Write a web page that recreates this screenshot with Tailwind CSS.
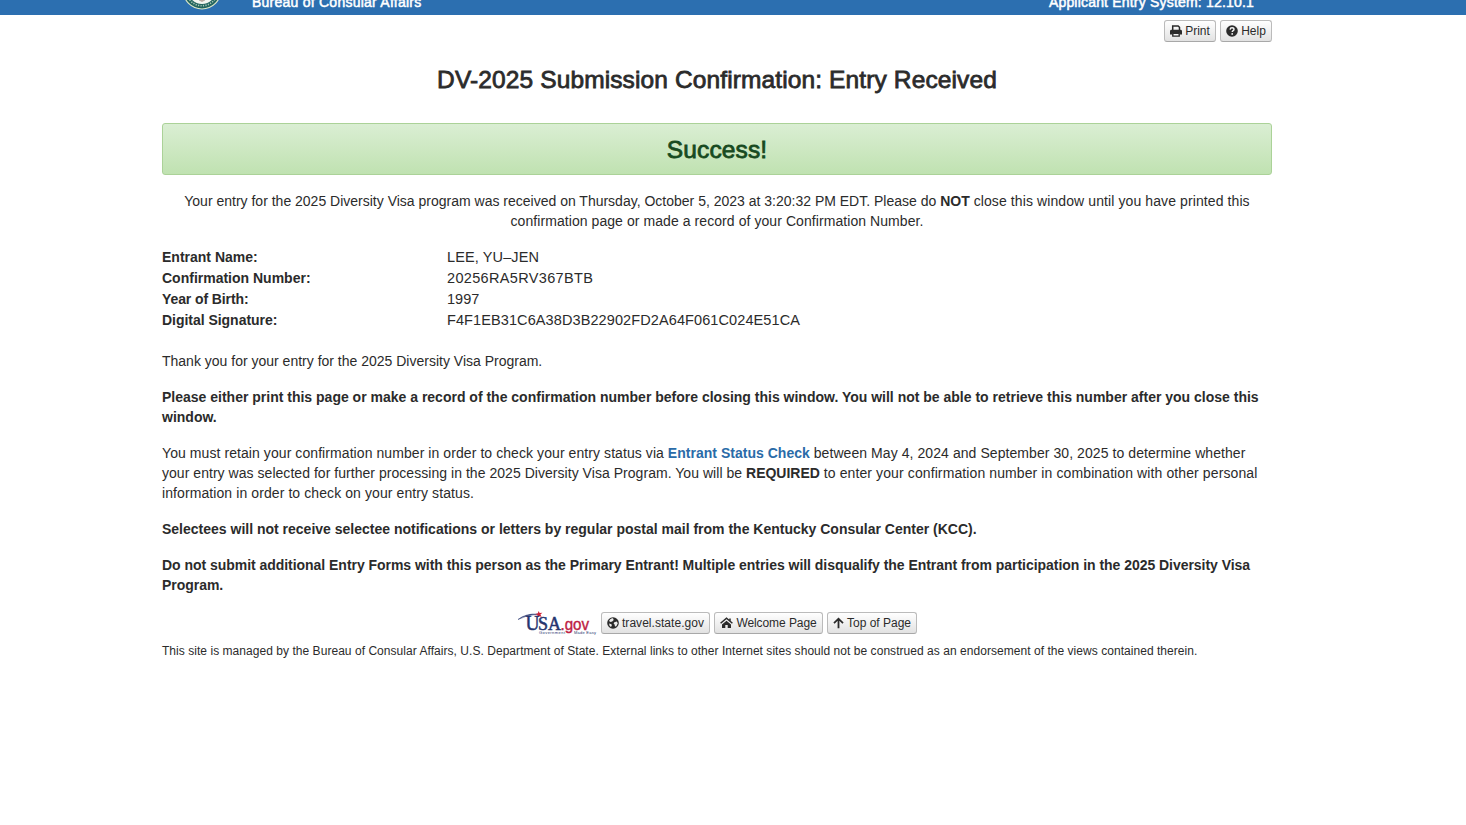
<!DOCTYPE html>
<html lang="en">
<head>
<meta charset="utf-8">
<title>DV-2025 Submission Confirmation</title>
<script src="https://cdn.jsdelivr.net/npm/@tailwindcss/browser@4"></script>
</head>
<body class="h-screen overflow-hidden bg-white font-['Liberation_Sans',Arial,sans-serif] text-sm leading-5 text-[#2b2b2b]">
<header class="h-[15px] overflow-hidden bg-[#2c6fb0] text-white">
  <div class="ml-[182px] flex h-[15px] w-[1072px] items-end">
    <svg class="mb-[5px] h-10 w-10 shrink-0" viewBox="0 0 40 40">
      <circle cx="20" cy="20" r="19.5" fill="#dfe9c8"/>
      <circle cx="20" cy="20" r="18.4" fill="#24655f"/>
      <circle cx="20" cy="20" r="15.8" fill="none" stroke="#a8c5b4" stroke-width="1.6" stroke-dasharray="1.2 1.3"/>
      <circle cx="20" cy="20" r="14" fill="#f4f5f0"/>
      <path d="M10 25l4 4M13 22l4 6M30 25l-4 4M27 22l-4 6M17 30h6" stroke="#8d9a91" stroke-width="1.2"/>
      <path d="M16 22h8v5q-1 4-4 5q-3-1-4-5z" fill="#b9a9a0"/>
    </svg>
    <div class="mb-[3px] ml-[30px] flex grow justify-between whitespace-nowrap [-webkit-text-stroke:0.5px_white]">
      <span class="tracking-[0.24px]">Bureau of Consular Affairs</span>
      <span class="tracking-[0.19px]">Applicant Entry System: 12.10.1</span>
    </div>
  </div>
</header>

<main class="ml-[162px] w-[1110px] whitespace-nowrap">
  <div class="flex justify-end gap-1 pt-[5px]">
    <a class="flex h-[22px] w-[52px] items-center justify-center gap-[3px] rounded-[3px] border border-[#bbb] border-b-[#a8a8a8] bg-gradient-to-b from-white to-[#e2e2e2] text-xs">
      <svg class="size-3" viewBox="0 0 12 12"><path d="M2.7 5V.9h5.4l1.4 1.4V5" fill="none" stroke="#2b2b2b" stroke-width="1.5"/><path d="M1.6 4.8h8.8Q12 4.8 12 6.2v3.3H9.6V8H2.4v1.5H0V6.2Q0 4.8 1.6 4.8z" fill="#2b2b2b"/><path d="M2.8 8.2v2.9h6.4V8.2z" fill="#f2f2f2" stroke="#2b2b2b" stroke-width="1.4"/></svg>
      <span>Print</span>
    </a>
    <a class="flex h-[22px] w-[52px] items-center justify-center gap-[3px] rounded-[3px] border border-[#bbb] border-b-[#a8a8a8] bg-gradient-to-b from-white to-[#e2e2e2] text-xs">
      <svg class="size-3" viewBox="0 0 12 12"><circle cx="6" cy="6" r="5.8" fill="#2b2b2b"/><path d="M4.1 4.6C4.2 3.3 5 2.8 6 2.8s2 .6 2 1.6C8 5.6 6.2 5.7 6.2 7" fill="none" stroke="#f4f4f4" stroke-width="1.4"/><circle cx="6.2" cy="8.9" r=".9" fill="#f4f4f4"/></svg>
      <span>Help</span>
    </a>
  </div>

  <h1 class="mt-[18px] text-center text-[24.5px] leading-10 tracking-[0.12px] [-webkit-text-stroke:0.8px_#2b2b2b]">DV-2025 Submission Confirmation: Entry Received</h1>
  <div class="mt-[23px] flex h-[52px] items-center justify-center rounded-[3px] border border-[#abd298] bg-gradient-to-b from-[#daeed3] to-[#c0e2b1] pt-0.5 text-[24.5px] tracking-[0.12px] text-[#174a20] [-webkit-text-stroke:0.8px_#174a20]"><span>Success!</span></div>

  <div class="mt-4 text-center">
    <p>Your entry for the 2025 Diversity Visa program was received on Thursday, October 5, 2023 at 3:20:32 PM EDT. Please do <b>NOT</b> <span class="tracking-[0.1px]">close this window until you have printed this</span></p>
    <p class="tracking-[0.071px]">confirmation page or made a record of your Confirmation Number.</p>
  </div>

  <dl class="mt-4 grid grid-cols-[285px_1fr] leading-[21px]">
    <dt class="font-bold">Entrant Name:</dt><dd class="text-[14.5px] tracking-[0.12px]">LEE, YU–JEN</dd>
    <dt class="font-bold">Confirmation Number:</dt><dd class="text-[14.5px] tracking-[0.34px]">20256RA5RV367BTB</dd>
    <dt class="font-bold tracking-[-0.1px]">Year of Birth:</dt><dd class="text-[14.5px]">1997</dd>
    <dt class="font-bold tracking-[-0.03px]">Digital Signature:</dt><dd class="text-[14.5px] tracking-[0.1px]">F4F1EB31C6A38D3B22902FD2A64F061C024E51CA</dd>
  </dl>

  <p class="mt-5">Thank you for your entry for the 2025 Diversity Visa Program.</p>
  <p class="mt-4 font-bold">Please either print this page or make a record of the confirmation number before closing this window. You will not be able to retrieve this number after you close this<br>window.</p>
  <p class="mt-4">
    <span class="tracking-[0.075px]">You must retain your confirmation number in order to check your entry status via</span> <a class="font-bold tracking-[0.02px] text-[#2a6ba8]">Entrant Status Check</a> <span class="tracking-[0.07px]">between May 4, 2024 and September 30, 2025 to determine whether</span><br>
    <span class="tracking-[0.04px]">your entry was selected for further processing in the 2025 Diversity Visa Program. You will be</span> <b>REQUIRED</b> <span class="tracking-[0.105px]">to enter your confirmation number in combination with other personal</span><br>
    <span class="tracking-[0.09px]">information in order to check on your entry status.</span>
  </p>
  <p class="mt-4 font-bold">Selectees will not receive selectee notifications or letters by regular postal mail from the Kentucky Consular Center (KCC).</p>
  <p class="mt-4 font-bold tracking-[-0.037px]">Do not submit additional Entry Forms with this person as the Primary Entrant! Multiple entries will disqualify the Entrant from participation in the 2025 Diversity Visa<br>Program.</p>

  <footer class="text-xs">
    <div class="mt-4 flex h-[23px] items-start justify-center gap-1">
      <svg class="h-6 w-20 shrink-0" viewBox="0 0 80 24">
        <path d="M1 8.5Q9 2.2 21 3.1Q9.500 3.9 1 8.5z" fill="#26356f" stroke="#26356f" stroke-width=".5"/>
        <path d="M21.700 0l.9 2.1 2.8-.3-2 1.8 1.3 2.3-2.5-1-1.9 1.8.2-2.6-2.4-1.1 2.600-.5z" fill="#d02236"/>
        <text x="8.500" y="19" font-family="Liberation Serif, serif" font-size="21" textLength="14" lengthAdjust="spacingAndGlyphs" fill="#26356f" stroke="#26356f" stroke-width=".5">U</text>
        <text x="21" y="19" font-family="Liberation Serif, serif" font-size="18.5" textLength="23" lengthAdjust="spacingAndGlyphs" fill="#26356f" stroke="#26356f" stroke-width=".5">SA</text>
        <text x="43.500" y="19" font-family="Liberation Sans, sans-serif" font-size="16.5" textLength="28.500" lengthAdjust="spacingAndGlyphs" fill="#bd2145" stroke="#bd2145" stroke-width=".4">.gov</text>
        <text x="22" y="23.300" font-family="Liberation Sans, sans-serif" font-size="4" textLength="26" fill="#26356f">Government</text>
        <text x="57" y="23.300" font-family="Liberation Sans, sans-serif" font-size="4" textLength="22" fill="#26356f">Made Easy</text>
      </svg>
      <a class="mt-px flex h-[22px] w-[109px] items-center justify-center gap-[3px] rounded-[3px] border border-[#bbb] border-b-[#a8a8a8] bg-gradient-to-b from-white to-[#e2e2e2]">
        <svg class="size-3" viewBox="0 0 12 12"><circle cx="6" cy="6" r="5.8" fill="#2b2b2b"/><path d="M5 1.2L3.2 2.2 2 4l1.500 1 1.700-.4L6.700 3 6 1.3zM7.300 5.200L9.800 4.600l1 1.600-1.500 3-1.300.3L7.600 7.400 6.600 6.400zM2.200 6.500l2.300.8.3 1.500-.9 1.200-1.500-1.600z" fill="#eee"/></svg>
        <span class="tracking-[0.04px]">travel.state.gov</span>
      </a>
      <a class="mt-px flex h-[22px] w-[109px] items-center justify-center gap-[3px] rounded-[3px] border border-[#bbb] border-b-[#a8a8a8] bg-gradient-to-b from-white to-[#e2e2e2]">
        <svg class="h-3 w-[13px]" viewBox="0 0 13 12"><path d="M.6 6.3L6.5 1.3l5.9 5M10 1.400v3" fill="none" stroke="#2b2b2b" stroke-width="1.5"/><path d="M6.500 3.800L11 7.600V11H7.700V8H5.300v3H2V7.600z" fill="#2b2b2b"/></svg>
        <span class="tracking-[-0.08px]">Welcome Page</span>
      </a>
      <a class="mt-px flex h-[22px] w-[90px] items-center justify-center gap-[3px] rounded-[3px] border border-[#bbb] border-b-[#a8a8a8] bg-gradient-to-b from-white to-[#e2e2e2]">
        <svg class="h-3 w-[11px]" viewBox="0 0 11 12"><path d="M5.500 11.300V1.800M1 6.200l4.500-4.500L10 6.200" fill="none" stroke="#2b2b2b" stroke-width="1.8"/></svg>
        <span>Top of Page</span>
      </a>
    </div>
    <p class="mt-[7px] leading-5 tracking-[0.043px]">This site is managed by the Bureau of Consular Affairs, U.S. Department of State. External links to other Internet sites should not be construed as an endorsement of the views contained therein.</p>
  </footer>
</main>
</body>
</html>
